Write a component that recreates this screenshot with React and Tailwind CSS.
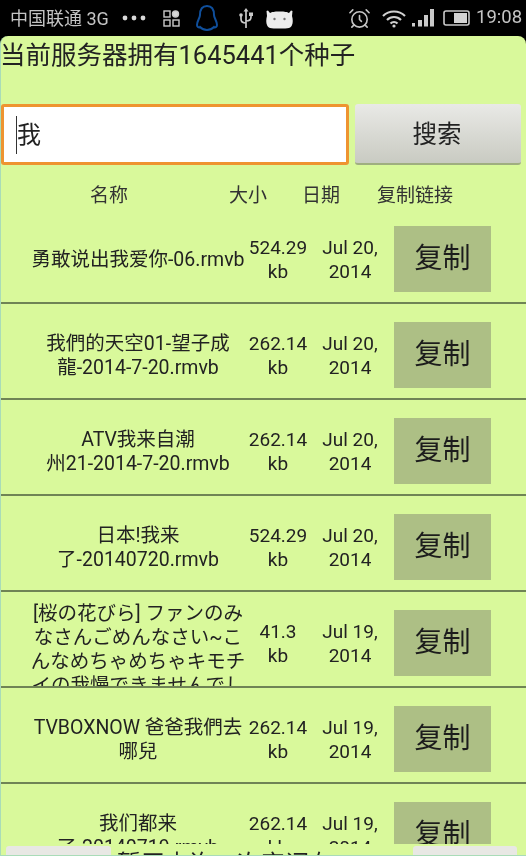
import { AlarmClock } from "lucide-react";

const FONT = "font-['Roboto','Noto_Sans_CJK_SC',sans-serif]";

const ROWS = [
  { name: "勇敢说出我爱你-06.rmvb", size: "524.29 kb", date: "Jul 20, 2014" },
  { name: "我們的天空01-望子成\n龍-2014-7-20.rmvb", size: "262.14 kb", date: "Jul 20, 2014" },
  { name: "ATV我来自潮\n州21-2014-7-20.rmvb", size: "262.14 kb", date: "Jul 20, 2014" },
  { name: "日本!我来\n了-20140720.rmvb", size: "524.29 kb", date: "Jul 20, 2014" },
  {
    name: "[桜の花びら] ファンのみ\nなさんごめんなさい~こ\nんなめちゃめちゃキモチ\nイの我慢できませんでし",
    size: "41.3 kb",
    date: "Jul 19, 2014",
  },
  { name: "TVBOXNOW 爸爸我們去\n哪兒", size: "262.14 kb", date: "Jul 19, 2014" },
  { name: "我们都来\n了-20140719.rmvb", size: "262.14 kb", date: "Jul 19, 2014" },
];

function StatusBar() {
  return (
    <div className="h-[36px] shrink-0 flex items-center pl-[10px] text-[#c4c4c4] text-[18px]">
      <span className="w-[103px] whitespace-nowrap">中国联通 3G</span>
      <svg width="24" height="6" viewBox="0 0 24 6" className="ml-[9px]" fill="#d8d8d8">
        <circle cx="3" cy="3" r="2.4" />
        <circle cx="12" cy="3" r="2.4" />
        <circle cx="21" cy="3" r="2.4" />
      </svg>
      <svg width="17" height="17" viewBox="0 0 17 17" className="ml-[17px]" fill="none" stroke="#c9c9c9" strokeWidth="1.4">
        <rect x="1" y="1" width="6" height="6" />
        <circle cx="12.5" cy="4" r="3" fill="#d8d8d8" />
        <rect x="1" y="10" width="6" height="6" />
        <rect x="10" y="10" width="6" height="6" />
      </svg>
      <svg width="24" height="28" viewBox="0 0 24 28" className="ml-[15px]" fill="none" stroke="#0f4f9c" strokeWidth="2">
        <path d="M12 2C7 2 5 6 5 11c0 3-3 6-3 10 0 2 2 3 3 2 2 2 4 3 7 3s5-1 7-3c1 1 3 0 3-2 0-4-3-7-3-10 0-5-2-9-7-9z" />
      </svg>
      <svg width="16" height="21" viewBox="0 0 16 21" className="ml-[19px]" fill="none" stroke="#c9c9c9" strokeWidth="1.7">
        <path d="M8 20V3M8 15c-3 0-5-1-5-4V8M8 13c3 0 5-1 5-4V7" />
        <path d="M8 0l2.5 3.5h-5z" fill="#c9c9c9" stroke="none" />
        <circle cx="3" cy="7" r="1.8" fill="#c9c9c9" stroke="none" />
        <rect x="11" y="4.5" width="4" height="3.5" fill="#c9c9c9" stroke="none" />
      </svg>
      <svg width="27" height="21" viewBox="0 0 27 21" className="ml-[12px]" fill="#ececec">
        <path d="M1 8l-.5-5 1.500-.5L4 5c2-1 4-1.500 9.500-1.500S21 4 23 5l2-2.500 1.500.5L26 8c1 3 1 7 0 9-1 3-3 3.500-12.500 3.500S2 20 1 17C0 15 0 11 1 8z" />
        <circle cx="8.500" cy="11" r="1.200" fill="#777" />
        <circle cx="18.500" cy="11" r="1.200" fill="#777" />
      </svg>
      <AlarmClock size={23} strokeWidth={1.7} className="ml-[55px]" />
      <svg width="24" height="19" viewBox="0 0 24 19" className="ml-[11px]" fill="none" stroke="#d0d0d0" strokeWidth="2.2">
        <path d="M1 7c6-6 16-6 22 0M5 11c4-4 10-4 14 0M8.500 14.500c2-2 5-2 7 0" />
        <circle cx="12" cy="17" r="1.600" fill="#d0d0d0" stroke="none" />
      </svg>
      <svg width="22" height="20" viewBox="0 0 22 20" className="ml-[6px]" fill="#c9c9c9">
        <rect x="0" y="15" width="3" height="3.500" />
        <rect x="6" y="12" width="4" height="6.500" />
        <rect x="12" y="7" width="4" height="11.500" />
        <rect x="18" y="1" width="4" height="17.500" />
      </svg>
      <svg width="27" height="16" viewBox="0 0 27 16" className="ml-[9px]" fill="none">
        <rect x="1" y="1" width="25" height="14" rx="2" stroke="#c9c9c9" strokeWidth="1.600" />
        <rect x="11" y="3" width="13" height="10" fill="#d4d4d4" />
      </svg>
      <span className="ml-[6px] text-[18.5px]">19:08</span>
    </div>
  );
}

function FileRow({ row }) {
  return (
    <div className="h-[96px] shrink-0 flex items-center pt-[10px] pb-[1px] border-b-2 border-[#6f8455] text-[19px] leading-[24px] text-[#222] text-center">
      <div className="w-[216px] ml-[29px] max-h-[84px] overflow-hidden text-[19.5px] whitespace-pre-line">{row.name}</div>
      <div className="w-[60px] ml-[2px]">{row.size}</div>
      <div className="w-[62px] ml-[11px]">{row.date}</div>
      <button className="w-[97px] h-[66px] mb-[2px] ml-[13px] bg-[#adbf85] text-[28px] text-[#1c1c1c]">复制</button>
    </div>
  );
}

export default function App() {
  return (
    <div className={`relative w-[526px] h-[856px] overflow-hidden bg-black blur-[0.5px] ${FONT}`}>
      <div className="flex flex-col h-full">
        <StatusBar />
        <div className="flex-1 min-h-0 flex flex-col bg-[#d9f99b] rounded-t-lg text-[#222] border-l border-b border-[#a9dcb8]">
          <div className="h-[33px] -ml-[1px] text-[25.5px] leading-[38px] shrink-0 whitespace-nowrap">当前服务器拥有1645441个种子</div>
          <div className="flex items-stretch gap-[6px] mt-[35px] pr-[5px] h-[61px] shrink-0">
            <div className="w-[348px] flex items-center pl-[12px] bg-white border-[3px] border-[#ee9430] rounded-[3px] text-[24px]">
              <span className="border-l border-[#333] leading-[38px]">我</span>
            </div>
            <button className="flex-1 pt-[4px] pr-[2px] bg-gradient-to-b from-[#e9e9e6] to-[#c9cbc2] border-b-2 border-[#9fae80] rounded-[3px] text-[24.5px]">
              搜索
            </button>
          </div>
          <div className="h-[43px] shrink-0 flex items-center pt-[20px] text-[19px] text-[#333] whitespace-nowrap">
            <span className="ml-[89px]">名称</span>
            <span className="ml-[101px]">大小</span>
            <span className="ml-[35px]">日期</span>
            <span className="ml-[37px]">复制链接</span>
          </div>
          <div className="flex-1 min-h-0 overflow-hidden flex flex-col">
            {ROWS.map((row, i) => (
              <FileRow key={i} row={row} />
            ))}
          </div>
          <div className="h-[11px] shrink-0 flex items-start overflow-hidden pl-[5px]">
            <div className="w-[105px] h-[10px] mt-[2px] bg-[#e8e8e4] rounded-t-[3px]" />
            <div className="w-[302px] pl-[6px] mt-[8px] text-[24px] leading-[24px] text-[#222] whitespace-nowrap">暂无查询一次字词有</div>
            <div className="w-[104px] h-[10px] mt-[2px] bg-[#e8e8e4] rounded-t-[3px]" />
          </div>
        </div>
      </div>
    </div>
  );
}
